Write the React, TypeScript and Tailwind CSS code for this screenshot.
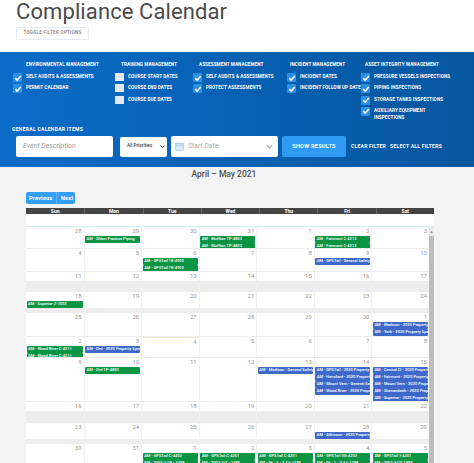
import React from "react";

const font = { fontFamily: '"Roboto","Liberation Sans",sans-serif' };

type Col = { ml: string; w: string; title: string; items: [string, boolean][] };

const cols: Col[] = [
  { ml: "ml-[13px]", w: "w-[115px] pl-[13px]", title: "ENVIRONMENTAL MANAGEMENT", items: [["SELF AUDITS & ASSESSMENTS", true], ["PERMIT CALENDAR", true]] },
  { ml: "ml-[6px]", w: "w-[78px]", title: "TRAINING MANAGEMENT", items: [["COURSE START DATES", false], ["COURSE END DATES", false], ["COURSE DUE DATES", false]] },
  { ml: "ml-[6px]", w: "w-[94px]", title: "ASSESSMENT MANAGEMENT", items: [["SELF AUDITS & ASSESSMENTS", true], ["PROTECT ASSESSMENTS", true]] },
  { ml: "ml-[3px]", w: "w-[74px]", title: "INCIDENT MANAGEMENT", items: [["INCIDENT DATES", true], ["INCIDENT FOLLOW UP DATE", true]] },
  { ml: "ml-[4px]", w: "w-[100px]", title: "ASSET INTEGRITY MANAGEMENT", items: [["PRESSURE VESSELS INSPECTIONS", true], ["PIPING INSPECTIONS", true], ["STORAGE TANKS INSPECTIONS", true], ["AUXILIARY EQUIPMENT INSPECTIONS", true]] },
];

function Box({ on }: { on: boolean }) {
  return on ? (
    <span className="flex h-[9px] w-[9px] shrink-0 items-center justify-center rounded-[1px] bg-[#2b8fe6]">
      <svg viewBox="0 0 10 10" className="h-[8px] w-[8px]" fill="none" stroke="white" strokeWidth="2">
        <path d="M1.5 5.2 4 7.5 8.5 2.5" />
      </svg>
    </span>
  ) : (
    <span className="h-[8px] w-[9px] shrink-0 bg-[#e4e9ee]" />
  );
}

type Ev = [string, "g" | "b"];
type Week = { h: string; band?: string; nums: number[]; ev?: Record<number, Ev[]> };

const weeks: Week[] = [
  { h: "h-[22px]", nums: [28, 29, 30, 31, 1, 2, 3], ev: { 1: [["AM - Oldon Process Piping", "g"]], 3: [["AM - Bluffton TP-4803", "g"], ["AM - Bluffton TP-4803", "g"]], 5: [["AM - Fairmont C-4212", "g"], ["AM - Fairmont C-4212", "g"]] } },
  { h: "h-[23px]", nums: [4, 5, 6, 7, 8, 9, 10], ev: { 2: [["AM - GPSTail TK-4903", "g"], ["AM - GPSTail TK-4903", "g"]], 5: [["AM - GPSTail - General Safety -", "b"]] } },
  { h: "h-[20px]", band: "h-[11px]", nums: [11, 12, 13, 14, 15, 16, 17] },
  { h: "h-[21px]", band: "h-[5px]", nums: [18, 19, 20, 21, 22, 23, 24], ev: { 0: [["AM - Superior Z-7002", "g"]] } },
  { h: "h-[24px]", nums: [25, 26, 27, 28, 29, 30, 1], ev: { 6: [["AM - Madison - 2020 Property S", "b"], ["AM - York - 2020 Property Spec", "b"]] } },
  { h: "h-[21px]", nums: [2, 3, 4, 5, 6, 7, 8], ev: { 0: [["AM - Wood River C-4211", "g"], ["AM - Wood River C-4211", "g"]], 1: [["AM - Ord - 2020 Property Spect", "b"]] } },
  { h: "h-[44px]", nums: [9, 10, 11, 12, 13, 14, 15], ev: { 1: [["AM - Ord TP-4803", "g"]], 4: [["AM - Madison - General Safety -", "b"]], 5: [["AM - GPSTail - 2020 Property S", "b"], ["AM - Hensford - 2020 Property S", "b"], ["AM - Mount Vern - General Safe", "b"], ["AM - Wood River - 2020 Propert", "b"]], 6: [["AM - Central Cl - 2020 Property", "b"], ["AM - Fairmont - 2020 Property", "b"], ["AM - Mount Vern - 2020 Propert", "b"], ["AM - Shenandoah - 2020 Prope", "b"], ["AM - Superior - 2020 Property S", "b"]] } },
  { h: "h-[21px]", band: "h-[13px]", nums: [16, 17, 18, 19, 20, 21, 22] },
  { h: "h-[21px]", band: "h-[6px]", nums: [23, 24, 25, 26, 27, 28, 29], ev: { 5: [["AM - Atkinson - 2020 Property S", "b"]] } },
  { h: "h-[30px]", nums: [30, 31, 1, 2, 3, 4, 5], ev: { 2: [["AM - GPSTail C-4402", "g"], ["EM - 2002-1/18 - 1488", "g"]], 3: [["AM - GPSTail C-4201", "g"], ["EM - 2002-2/2 - 1488", "g"]], 4: [["AM - GPSTail C-4201", "g"], ["EM - 96 - 1 - 3 4 6 1488", "g"]], 5: [["AM - GPSTail VG-4202", "g"], ["EM - 96 - 1 - 3 4 6 1488", "g"]], 6: [["AM - GPSTail T-4201", "g"], ["EM - 2002-2/10 1888", "g"]] } },
];

function Field({ children, className }: { children: React.ReactNode; className: string }) {
  return <div className={`flex items-center rounded-[2px] bg-white ${className}`}>{children}</div>;
}

export default function App() {
  return (
    <div className="flex h-[463px] w-[474px] flex-col overflow-hidden bg-[#f3f3f3]" style={font}>
      <div className="flex h-[52px] shrink-0 flex-col bg-white pl-[16px]">
        <h1 className="h-[25px] text-[22px] leading-[23px] font-normal tracking-[0.1px] whitespace-nowrap text-[#4a4a4a]">Compliance Calendar</h1>
        <button className="mt-[2px] h-[13px] w-[73px] rounded-[1px] border border-[#e3ecf3] text-[4.5px] font-medium tracking-[0.3px] text-[#777] whitespace-nowrap">TOGGLE FILTER OPTIONS</button>
      </div>

      <div className="flex h-[115px] shrink-0 flex-col bg-gradient-to-r from-[#0b6cc8] to-[#05569e] text-white">
        <div className="flex h-[74px] pt-[10px]">
          {cols.map((c, i) => (
            <div key={i} className={`flex shrink-0 flex-col ${c.w}`}>
              <div className={`h-[6px] text-[4.6px] leading-[6px] font-bold tracking-[0.1px] whitespace-nowrap ${c.ml}`}>{c.title}</div>
              <div className="mt-[5px] flex flex-col">
                {c.items.map(([t, on], j) => (
                  <div key={j} className={`flex gap-[4px] ${j === 3 ? "" : "h-[11.3px]"}`}>
                    <Box on={on} />
                    <span className={`text-[4.6px] leading-[7px] font-bold tracking-[0.1px] ${j === 3 ? "w-[60px]" : "whitespace-nowrap"}`}>{t}</span>
                  </div>
                ))}
              </div>
            </div>
          ))}
        </div>
        <div className="ml-[12px] h-[10px] text-[5px] leading-[6px] font-bold tracking-[0.3px]">GENERAL CALENDAR ITEMS</div>
        <div className="flex items-center pl-[16px]">
          <Field className="h-[21px] w-[97px] pl-[7px]">
            <span className="text-[7px] text-[#999] italic">Event Description</span>
          </Field>
          <Field className="ml-[7px] h-[20px] w-[47px] justify-between pr-[2px] pl-[7px]">
            <span className="text-[4.6px] font-medium text-[#444] whitespace-nowrap">All Priorities</span>
            <svg viewBox="0 0 10 10" className="h-[5px] w-[5px] shrink-0" fill="none" stroke="#333" strokeWidth="2"><path d="M1 3l4 4 4-4" /></svg>
          </Field>
          <Field className="ml-[4px] h-[21px] w-[107px] justify-between pr-[5px] pl-[4px]">
            <span className="flex items-center gap-[4px]">
              <svg viewBox="0 0 12 12" className="h-[9px] w-[9px]" fill="none" stroke="#9cc6ea" strokeWidth="1">
                <rect x="1" y="2" width="10" height="9" fill="#dcebf7" />
                <path d="M1 4.5h10M3.5 0.5v2.5M8.5 0.5v2.5" />
              </svg>
              <span className="text-[7px] text-[#aaa] italic">Start Date</span>
            </span>
            <svg viewBox="0 0 10 10" className="h-[7px] w-[7px]" fill="none" stroke="#aaa" strokeWidth="1.6"><path d="M1 3l4 4 4-4" /></svg>
          </Field>
          <button className="ml-[4px] h-[21px] w-[64px] rounded-[2px] bg-[#2f9bf3] text-[5.5px] font-bold tracking-[0.3px] whitespace-nowrap">SHOW RESULTS</button>
          <span className="ml-[5px] text-[5px] font-bold tracking-[0.25px] whitespace-nowrap">CLEAR FILTER</span>
          <span className="ml-[4px] text-[5px] font-bold tracking-[0.25px] whitespace-nowrap">SELECT ALL FILTERS</span>
        </div>
      </div>

      <div className="flex h-[41px] shrink-0 flex-col border-t border-[#eaf4f8] pl-[26px]">
        <div className="h-[24px] pr-[52px] text-center text-[8.5px] leading-[12px] font-medium text-[#4d4d4d]">April – May 2021</div>
        <div className="flex h-[12px] w-[49px] items-center rounded-[2px] bg-[#34a0f5] text-[5.5px] font-bold tracking-[0.2px] text-white">
          <span className="w-[30px] pl-[3px]">Previous</span>
          <span className="flex h-full flex-1 items-center border-l border-[#5ab2f7] pl-[4px]">Next</span>
        </div>
      </div>

      <div className="ml-[26px] w-[408px] min-h-0 flex-1 overflow-hidden">
        <div className="grid h-[6px] grid-cols-7 bg-[#444]">
          {["Sun", "Mon", "Tue", "Wed", "Thu", "Fri", "Sat"].map((d) => (
            <div key={d} className="border-l border-[#666] text-center text-[5px] leading-[6px] font-bold text-white first:border-l-0">{d}</div>
          ))}
        </div>
        <div className="h-[13px] border-b border-[#d9edf5] bg-white" />
        <div className="flex">
          <div className="w-[403px] shrink-0">
            {weeks.map((w, i) => (
              <div key={i} className={`grid grid-cols-7 overflow-hidden border-b border-[#ececec] bg-white ${w.h}`}>
                {w.nums.map((n, c) => (
                  <div key={c} className={`flex min-w-0 flex-col border-l border-[#f1f1f1] first:border-l-0 ${i === 5 && c === 2 ? "border-t border-t-[#f3edc8]" : ""}`}>
                    <div className="h-[9px] shrink-0 pr-[2px] text-right text-[6px] leading-[8px] text-[#999]">{n}</div>
                    <div className="flex flex-col gap-[0.5px] pr-[1px] pl-[0.5px]">
                      {(w.ev?.[c] ?? []).map(([t, k], e) => (
                        <div key={e} className={`h-[6.5px] shrink-0 overflow-hidden rounded-[1px] pl-[1.5px] text-[4px] leading-[6.5px] font-medium whitespace-nowrap text-white ${k === "g" ? "bg-[#0b9444]" : "bg-[#3f69c9]"}`}>{t}</div>
                      ))}
                    </div>
                    {w.band ? <div className={`mt-auto shrink-0 bg-[#ededed] ${w.band}`} /> : null}
                  </div>
                ))}
              </div>
            ))}
          </div>
          <div className="flex w-[5px] shrink-0 flex-col bg-[#e9e9e9]">
            <div className="h-[9px] text-center text-[4px] leading-[9px] text-[#888]">▲</div>
            <div className="flex-1 bg-[#bdbdbd]" />
          </div>
        </div>
      </div>
    </div>
  );
}
